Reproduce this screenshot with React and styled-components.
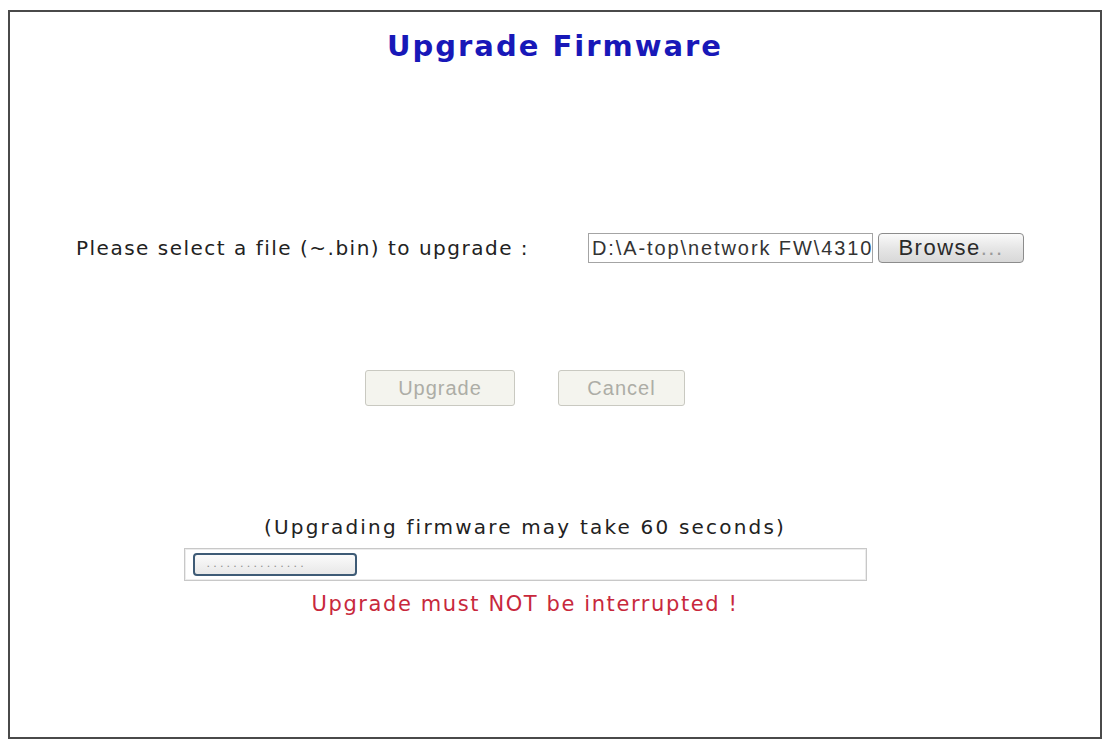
import React from 'react';
import styled, {createGlobalStyle} from 'styled-components';

const GlobalStyle = createGlobalStyle`
  html, body {
    margin: 0;
    padding: 0;
    background: #ffffff;
  }
  body {
    font-family: "DejaVu Sans", Verdana, sans-serif;
  }
`;

const StyledFrame = styled.div`
  box-sizing: border-box;
  margin: 10px 4px 0 8px;
  width: 1094px;
  height: 729px;
  border: 2px solid #4a4a4a;
  display: flex;
  flex-direction: column;
  align-items: center;
`;

const StyledTitle = styled.h1`
  margin: 17px 0 0;
  font-family: "DejaVu Sans", Verdana, sans-serif;
  font-weight: bold;
  font-size: 29px;
  line-height: 34px;
  letter-spacing: 2px;
  color: #1818b8;
`;

const StyledFileRow = styled.div`
  align-self: stretch;
  display: flex;
  align-items: center;
  height: 30px;
  margin-top: 170px;
  padding-left: 66px;
`;

const StyledLabel = styled.label`
  width: 512px;
  flex: none;
  font-size: 20px;
  letter-spacing: 1.5px;
  color: #222222;
  white-space: nowrap;
`;

const StyledFileInput = styled.div`
  box-sizing: border-box;
  width: 285px;
  height: 30px;
  border: 1px solid #a4a4a4;
  background: #ffffff;
  padding: 0 0 0 3px;
  overflow: hidden;
  white-space: nowrap;
  font-family: "Liberation Sans", Arial, sans-serif;
  font-size: 20px;
  letter-spacing: 1.9px;
  line-height: 28px;
  color: #333333;
`;

const StyledBrowse = styled.button`
  box-sizing: border-box;
  margin-left: 5px;
  width: 146px;
  height: 30px;
  border: 1px solid #8c8c8c;
  border-radius: 4px;
  background: linear-gradient(#fafafa, #e6e6e6 50%, #d8d8d8);
  font-family: "Liberation Sans", Arial, sans-serif;
  font-size: 22px;
  letter-spacing: 1.5px;
  color: #2a2a2a;
  padding: 0;

  & span {
    color: #9a9a9a;
  }
`;

const StyledBody = styled.div`
  align-self: stretch;
  display: flex;
  flex-direction: column;
  align-items: center;
  padding-right: 60px;
`;

const StyledActions = styled.div`
  display: flex;
  gap: 43px;
  margin-top: 107px;
`;

const StyledActionButton = styled.button`
  box-sizing: border-box;
  width: ${props => props.$width}px;
  height: 36px;
  border: 1px solid #c9c9c1;
  border-radius: 3px;
  background: #f4f4ee;
  font-family: "Liberation Sans", Arial, sans-serif;
  font-size: 20px;
  letter-spacing: 1px;
  color: #adada6;
  padding: 0;
`;

const StyledNote = styled.p`
  margin: 109px 0 0;
  font-size: 20px;
  line-height: 24px;
  letter-spacing: 2.2px;
  color: #222222;
`;

const StyledProgressBox = styled.div`
  box-sizing: border-box;
  margin-top: 9px;
  width: 683px;
  height: 33px;
  border: 1px solid #c8c8c8;
  box-shadow: inset 0 0 0 1px #ececec;
  background: #ffffff;
  display: flex;
  align-items: center;
  padding-left: 8px;
`;

const StyledProgressButton = styled.div`
  box-sizing: border-box;
  width: 164px;
  height: 23px;
  border: 2px solid #3e5b76;
  border-radius: 4px;
  background: linear-gradient(#fbfbfb, #e8e8e8);
  font-size: 11px;
  line-height: 17px;
  letter-spacing: 3.2px;
  color: #8e8e8e;
  padding-left: 12px;
  overflow: hidden;
  white-space: nowrap;
`;

const StyledWarning = styled.p`
  margin: 11px 0 0;
  font-size: 21px;
  line-height: 24px;
  letter-spacing: 1.6px;
  color: #c8283c;
`;

const App = () => {
    return (
        <>
            <GlobalStyle/>
            <StyledFrame>
                <StyledTitle>Upgrade Firmware</StyledTitle>
                <StyledFileRow>
                    <StyledLabel>Please select a file (~.bin) to upgrade :</StyledLabel>
                    <StyledFileInput>D:\A-top\network FW\4310</StyledFileInput>
                    <StyledBrowse>Browse<span>...</span></StyledBrowse>
                </StyledFileRow>
                <StyledBody>
                    <StyledActions>
                        <StyledActionButton $width={150} disabled>Upgrade</StyledActionButton>
                        <StyledActionButton $width={127} disabled>Cancel</StyledActionButton>
                    </StyledActions>
                    <StyledNote>(Upgrading firmware may take 60 seconds)</StyledNote>
                    <StyledProgressBox>
                        <StyledProgressButton>...............</StyledProgressButton>
                    </StyledProgressBox>
                    <StyledWarning>Upgrade must NOT be interrupted !</StyledWarning>
                </StyledBody>
            </StyledFrame>
        </>
    );
}

export default App;
